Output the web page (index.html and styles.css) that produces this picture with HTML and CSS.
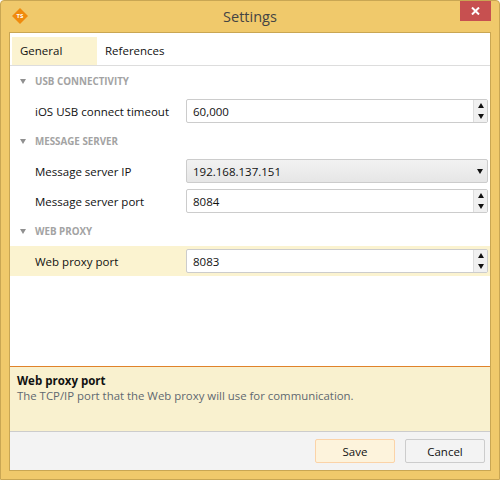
FILE: index.html
```html
<!DOCTYPE html>
<html lang="en">
<head>
  <meta charset="UTF-8">
  <title>Settings</title>
  <link rel="stylesheet" href="styles.css">
</head>
<body>
  <div class="window">
    <header class="titlebar">
      <svg class="app-icon" width="16" height="16" viewBox="0 0 16 16">
        <polygon points="8,0 16,8 8,16 0,8" fill="#f08a0c"/>
        <text x="8" y="10" text-anchor="middle" class="app-icon-text">TS</text>
      </svg>
      <div class="title">Settings</div>
      <div class="close-btn">
        <svg width="9" height="8" viewBox="0 0 9 8">
          <path d="M1 0.5 L8 7.5 M8 0.5 L1 7.5" stroke="#fff" stroke-width="2" fill="none"/>
        </svg>
      </div>
    </header>

    <div class="content">
      <nav class="tabs">
        <div class="tab active">General</div>
        <div class="tab">References</div>
      </nav>

      <main class="settings">
        <div class="group-header"><span class="caret"></span>USB CONNECTIVITY</div>
        <div class="row">
          <label>iOS USB connect timeout</label>
          <div class="field">
            <span class="value">60,000</span>
            <div class="spinner">
              <div class="spin-btn"><span class="arrow-up"></span></div>
              <div class="spin-btn"><span class="arrow-down"></span></div>
            </div>
          </div>
        </div>

        <div class="group-header"><span class="caret"></span>MESSAGE SERVER</div>
        <div class="row">
          <label>Message server IP</label>
          <div class="field select">
            <span class="value">192.168.137.151</span>
            <span class="arrow-down select-arrow"></span>
          </div>
        </div>
        <div class="row">
          <label>Message server port</label>
          <div class="field">
            <span class="value">8084</span>
            <div class="spinner">
              <div class="spin-btn"><span class="arrow-up"></span></div>
              <div class="spin-btn"><span class="arrow-down"></span></div>
            </div>
          </div>
        </div>

        <div class="group-header"><span class="caret"></span>WEB PROXY</div>
        <div class="row selected">
          <label>Web proxy port</label>
          <div class="field">
            <span class="value">8083</span>
            <div class="spinner">
              <div class="spin-btn"><span class="arrow-up"></span></div>
              <div class="spin-btn"><span class="arrow-down"></span></div>
            </div>
          </div>
        </div>
      </main>

      <section class="description">
        <h2>Web proxy port</h2>
        <p>The TCP/IP port that the Web proxy will use for communication.</p>
      </section>

      <footer class="footer">
        <button class="save-btn">Save</button>
        <button>Cancel</button>
      </footer>
    </div>
  </div>
</body>
</html>
```

FILE: styles.css
```css
* {
  box-sizing: border-box;
}

body {
  margin: 0;
  font-family: "Open Sans", sans-serif;
  font-size: 11.5px;
  color: #111;
  background: #fff;
}

.window {
  display: flex;
  flex-direction: column;
  width: 500px;
  height: 480px;
  padding: 0 8px 8px;
  background-color: #f0c96b;
  border: 1px solid #c9a653;
  border-radius: 4px 4px 0 0;
}

.titlebar {
  position: relative;
  display: flex;
  align-items: center;
  justify-content: center;
  flex: none;
  height: 31px;
}

.app-icon {
  position: absolute;
  left: 3px;
  top: 7px;
}

.app-icon-text {
  font-size: 6px;
  font-weight: bold;
  fill: #fff;
}

.title {
  font-size: 14.5px;
  color: #444;
}

.close-btn {
  position: absolute;
  top: 0;
  right: 0;
  display: flex;
  align-items: center;
  justify-content: center;
  width: 31px;
  height: 20px;
  background-color: #c75050;
}

.content {
  display: flex;
  flex-direction: column;
  flex: 1;
  background: #fff;
  border: 1px solid #c9a653;
}

.tabs {
  display: flex;
  flex: none;
  height: 33px;
  padding: 4px 2px 0;
  border-bottom: 1px solid #ddd;
}

.tab {
  padding: 6px 8px 0;
}

.tab.active {
  width: 85px;
  background-color: #fbf3d0;
}

.settings {
  flex: 1;
}

.group-header {
  display: flex;
  align-items: center;
  height: 30px;
  padding-left: 10px;
  font-size: 9.8px;
  font-weight: bold;
  color: #a3a3a3;
}

.caret {
  width: 0;
  height: 0;
  margin-right: 9px;
  border-left: 3.5px solid transparent;
  border-right: 3.5px solid transparent;
  border-top: 5px solid #909090;
}

.row {
  display: flex;
  align-items: center;
  height: 30px;
  padding: 0 2px 0 25px;
}

.row.selected {
  background-color: #fbf3d0;
}

.row label {
  width: 151px;
}

.field {
  display: flex;
  align-items: center;
  justify-content: space-between;
  width: 302px;
  height: 24px;
  padding-left: 6px;
  background: #fff;
  border: 1px solid #ccc;
  border-radius: 2px;
}

.field.select {
  padding-right: 4px;
  background: linear-gradient(#f2f2f2, #e6e6e6);
}

.spinner {
  display: flex;
  flex-direction: column;
  width: 14px;
  height: 22px;
  background-color: #f0f0f0;
  border-left: 1px solid #ddd;
}

.spin-btn {
  display: flex;
  align-items: center;
  justify-content: center;
  flex: 1;
}

.arrow-up,
.arrow-down {
  width: 0;
  height: 0;
  border-left: 3.5px solid transparent;
  border-right: 3.5px solid transparent;
}

.arrow-up {
  border-bottom: 5px solid #111;
}

.arrow-down {
  border-top: 5px solid #111;
}

.select-arrow {
  margin-top: 1px;
}

.description {
  flex: none;
  height: 66px;
  padding: 6px 7px;
  background-color: #f9f1cf;
  border-top: 1px solid #e0832a;
  border-bottom: 1px solid #ccc;
}

.description h2 {
  margin: 0;
  font-size: 11.5px;
  font-weight: bold;
}

.description p {
  margin: 0;
  font-size: 11.4px;
  color: #5f6870;
}

.footer {
  display: flex;
  justify-content: flex-end;
  flex: none;
  gap: 10px;
  height: 38px;
  padding: 7px 5px 0 0;
  background-color: #f3f3f3;
}

button {
  width: 80px;
  height: 24px;
  padding: 0;
  font: inherit;
  color: #111;
  background-color: #f3f3f3;
  border: 1px solid #ccc;
  border-radius: 2px;
}

.save-btn {
  background-color: #fdf3dc;
  border-color: #fbd3a8;
}
```
